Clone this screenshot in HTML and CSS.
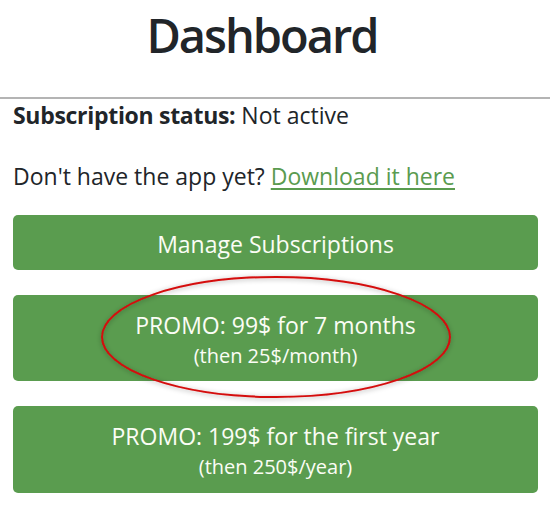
FILE: index.html
```html
<!DOCTYPE html>
<html>
<head>
<meta charset="utf-8">
<link rel="stylesheet" href="styles.css">
</head>
<body>
<div class="page">
  <h1 class="title">Dashboard</h1>
  <hr class="rule">
  <div class="content">
    <p class="status"><strong>Subscription status:</strong> Not active</p>
    <p class="app">Don't have the app yet? <a href="#" class="link">Download it here</a></p>
    <div class="buttons">
      <a href="#" class="btn btn-single">Manage Subscriptions</a>
      <a href="#" class="btn btn-double"><span class="main">PROMO: 99$ for 7 months</span><span class="sub">(then 25$/month)</span></a>
      <a href="#" class="btn btn-double btn-last"><span class="main">PROMO: 199$ for the first year</span><span class="sub">(then 250$/year)</span></a>
    </div>
  </div>
  <svg class="ellipse" width="550" height="516" viewBox="0 0 550 516">
    <defs>
      <filter id="glow" x="-10%" y="-20%" width="120%" height="140%">
        <feDropShadow dx="0" dy="1" stdDeviation="2.5" flood-color="#000" flood-opacity="0.35"/>
      </filter>
    </defs>
    <ellipse cx="276" cy="337" rx="174" ry="60" fill="none" stroke="#d40b0b" stroke-width="2" filter="url(#glow)"/>
  </svg>
</div>
</body>
</html>
```
FILE: styles.css
```css
html, body {
  margin: 0;
  padding: 0;
  background: #fff;
}
body {
  font-family: "Open Sans", "Noto Sans", sans-serif;
  color: #212529;
  width: 550px;
  height: 516px;
  overflow: hidden;
}
.page {
  position: relative;
  width: 550px;
  height: 516px;
}
.title {
  margin: 0;
  padding: 4px 26px 0 0;
  height: 64px;
  text-align: center;
  font-size: 47px;
  font-weight: 600;
  line-height: 62px;
  letter-spacing: -2px;
}
.rule {
  margin: 29px 0 0 0;
  border: 0;
  border-top: 2px solid #b4b4b4;
  height: 0;
}
.content {
  padding: 0 12px 0 13px;
}
.status, .app {
  margin: 0;
  font-size: 23px;
  line-height: 32px;
}
.app {
  margin-top: 29px;
}
.status strong {
  font-weight: 700;
  letter-spacing: -0.3px;
}
.link {
  color: #5a9b4f;
  text-decoration: underline;
  text-underline-offset: 3px;
  text-decoration-thickness: 1.5px;
}
.buttons {
  margin-top: 23px;
  display: flex;
  flex-direction: column;
  gap: 25px;
}
.btn {
  display: flex;
  flex-direction: column;
  align-items: center;
  justify-content: center;
  background: #5a9c4f;
  color: #fbfdf5;
  text-decoration: none;
  border-radius: 5px;
  font-size: 23px;
  box-sizing: border-box;
}
.btn-single {
  height: 55px;
  padding-top: 2px;
}
.btn-double {
  height: 86px;
  padding-top: 3px;
}
.btn-last {
  height: 87px;
}
.btn .main {
  line-height: 31px;
}
.btn .sub {
  font-size: 20px;
  line-height: 29px;
}
.ellipse {
  position: absolute;
  left: 0;
  top: 0;
  pointer-events: none;
}
```
